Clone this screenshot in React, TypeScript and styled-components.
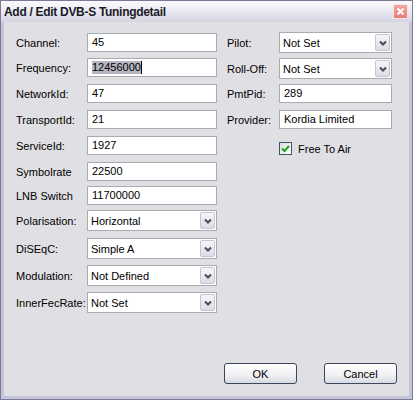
import React, { FC } from 'react';
import styled, { createGlobalStyle } from 'styled-components';

const GlobalStyle = createGlobalStyle`
  body {
    margin: 0;
    background: #ffffff;
    font-family: 'Liberation Sans', Arial, sans-serif;
  }
`;

const Window = styled.div`
  width: 413px;
  height: 400px;
  box-sizing: border-box;
  border: 1px solid #7a7a96;
  display: flex;
  flex-direction: column;
  background: #c4c4d8;
`;

const TitleBar = styled.div`
  height: 21px;
  display: flex;
  align-items: center;
  justify-content: space-between;
  padding: 0 4px 0 3px;
  background: linear-gradient(to bottom, #fafafd 0%, #ebebf3 45%, #d4d4e3 100%);
`;

const Title = styled.span`
  font-weight: 700;
  font-size: 12px;
  letter-spacing: -0.3px;
  color: #1a1a24;
`;

const CloseButton = styled.div`
  width: 13px;
  height: 13px;
  border: 1px solid #fbe2df;
  border-radius: 2px;
  background: linear-gradient(to bottom, #f0aaa3, #e07d75);
  display: flex;
  align-items: center;
  justify-content: center;
`;

const Body = styled.div`
  flex: 1;
  margin: 0 3px 3px 3px;
  background: #e0dfe3;
  display: flex;
  flex-direction: column;
  padding: 0 12px 12px 12px;
`;

const Columns = styled.div`
  display: flex;
  gap: 10px;
`;

const Column = styled.div`
  display: flex;
  flex-direction: column;
`;

const Row = styled.div<{ $gap: number }>`
  display: flex;
  align-items: center;
  margin-top: ${(p) => p.$gap}px;
`;

const Label = styled.span<{ $width: number }>`
  width: ${(p) => p.$width}px;
  font-size: 11px;
  color: #000;
  white-space: nowrap;
`;

const TextBox = styled.div<{ $width: number }>`
  width: ${(p) => p.$width}px;
  height: 19px;
  box-sizing: border-box;
  border: 1px solid #a5acb2;
  background: #fff;
  font-size: 11px;
  line-height: 17px;
  padding-left: 4px;
  display: flex;
  align-items: center;
`;

const Selected = styled.span`
  background: #b4b4c2;
  line-height: 13px;
`;

const Caret = styled.span`
  width: 1px;
  height: 13px;
  background: #000;
`;

const Combo = styled.div<{ $width: number }>`
  width: ${(p) => p.$width}px;
  height: 21px;
  box-sizing: border-box;
  border: 1px solid #a5acb2;
  background: #fff;
  display: flex;
  align-items: center;
  font-size: 11px;
`;

const ComboText = styled.span`
  flex: 1;
  padding-left: 3px;
`;

const DropButton = styled.div`
  width: 15px;
  height: 17px;
  margin: 1px;
  box-sizing: border-box;
  border: 1px solid #c4c4d4;
  border-radius: 2px;
  background: linear-gradient(to bottom, #f6f6f9, #dcdce6);
  display: flex;
  align-items: center;
  justify-content: center;
`;

const CheckRow = styled.label`
  display: flex;
  align-items: center;
  gap: 6px;
  margin-left: 52px;
  margin-top: 13px;
  font-size: 11px;
`;

const CheckBox = styled.div`
  width: 13px;
  height: 13px;
  box-sizing: border-box;
  border: 1px solid #3d5475;
  background: linear-gradient(135deg, #dcdcd7, #ffffff);
  display: flex;
  align-items: center;
  justify-content: center;
`;

const Footer = styled.div`
  margin-top: auto;
  display: flex;
  justify-content: flex-end;
  gap: 27px;
`;

const Button = styled.button`
  width: 73px;
  height: 21px;
  box-sizing: border-box;
  border: 1px solid #3c4860;
  border-radius: 3px;
  background: linear-gradient(to bottom, #ffffff 0%, #f0f0f4 60%, #d8d8e2 100%);
  font-family: 'Liberation Sans', Arial, sans-serif;
  font-size: 11px;
  color: #000;
  padding: 0;
`;

const Chevron: FC = () => (
  <svg width="8" height="6" viewBox="0 0 8 6">
    <path d="M1 1.5 L4 4.5 L7 1.5" fill="none" stroke="#4a4a5c" strokeWidth="2" />
  </svg>
);

const Field: FC<{ label: string; value: string; gap: number }> = ({ label, value, gap }) => (
  <Row $gap={gap}>
    <Label $width={71}>{label}</Label>
    <TextBox $width={130}>{value}</TextBox>
  </Row>
);

const Select: FC<{ label: string; value: string; gap: number; labelWidth: number; width: number }> = ({
  label,
  value,
  gap,
  labelWidth,
  width,
}) => (
  <Row $gap={gap}>
    <Label $width={labelWidth}>{label}</Label>
    <Combo $width={width}>
      <ComboText>{value}</ComboText>
      <DropButton>
        <Chevron />
      </DropButton>
    </Combo>
  </Row>
);

const App: FC = () => (
  <>
    <GlobalStyle />
    <Window>
      <TitleBar>
        <Title>Add / Edit DVB-S Tuningdetail</Title>
        <CloseButton>
          <svg width="9" height="9" viewBox="0 0 9 9">
            <path d="M1.5 1.5 L7.5 7.5 M7.5 1.5 L1.5 7.5" stroke="#fff" strokeWidth="1.8" />
          </svg>
        </CloseButton>
      </TitleBar>
      <Body>
        <Columns>
          <Column>
            <Field label="Channel:" value="45" gap={11} />
            <Row $gap={6}>
              <Label $width={71}>Frequency:</Label>
              <TextBox $width={130}>
                <Selected>12456000</Selected>
                <Caret />
              </TextBox>
            </Row>
            <Field label="NetworkId:" value="47" gap={7} />
            <Field label="TransportId:" value="21" gap={7} />
            <Field label="ServiceId:" value="1927" gap={7} />
            <Field label="Symbolrate" value="22500" gap={7} />
            <Field label="LNB Switch" value="11700000" gap={5} />
            <Select label="Polarisation:" value="Horizontal" gap={5} labelWidth={71} width={130} />
            <Select label="DiSEqC:" value="Simple A" gap={7} labelWidth={71} width={130} />
            <Select label="Modulation:" value="Not Defined" gap={6} labelWidth={71} width={130} />
            <Select label="InnerFecRate:" value="Not Set" gap={6} labelWidth={71} width={130} />
          </Column>
          <Column>
            <Select label="Pilot:" value="Not Set" gap={10} labelWidth={52} width={113} />
            <Select label="Roll-Off:" value="Not Set" gap={5} labelWidth={52} width={113} />
            <Row $gap={5}>
              <Label $width={52}>PmtPid:</Label>
              <TextBox $width={113}>289</TextBox>
            </Row>
            <Row $gap={7}>
              <Label $width={52}>Provider:</Label>
              <TextBox $width={113}>Kordia Limited</TextBox>
            </Row>
            <CheckRow>
              <CheckBox>
                <svg width="9" height="9" viewBox="0 0 9 9">
                  <path d="M1 4.5 L3.5 7 L8 2" fill="none" stroke="#21a121" strokeWidth="2" />
                </svg>
              </CheckBox>
              Free To Air
            </CheckRow>
          </Column>
        </Columns>
        <Footer>
          <Button>OK</Button>
          <Button>Cancel</Button>
        </Footer>
      </Body>
    </Window>
  </>
);

export default App;
